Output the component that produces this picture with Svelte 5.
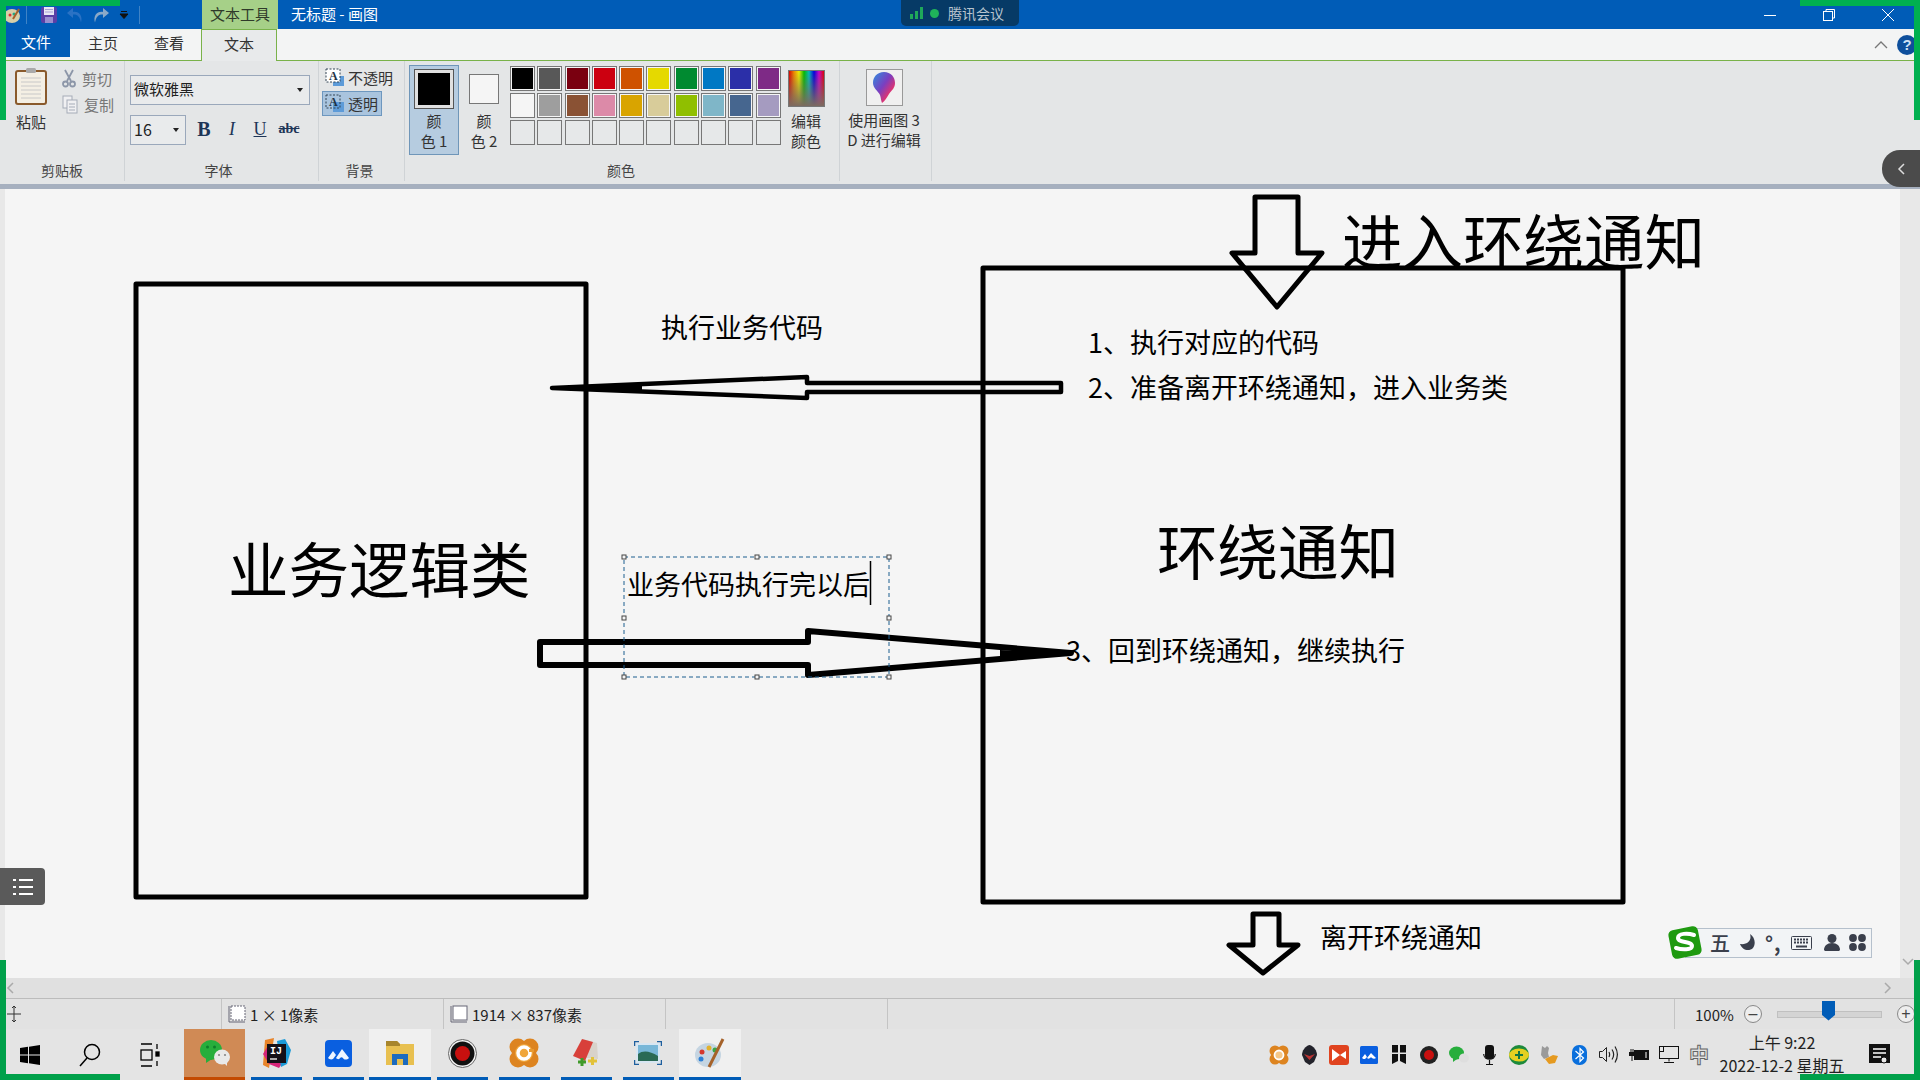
<script>
  const row1 = ['#000000','#585858','#7a0010','#cc0010','#cf5200','#e5d900','#008a30','#0078c4','#2b2fa8','#7e2a86'];
  const row2 = ['#f5f5f5','#9e9e9e','#8a5234','#dc8aa8','#d9a400','#d8cc9a','#90bf00','#7fb6c8','#46668f','#a59bc0'];
  const row3 = Array(10).fill('transparent');

  const labels = [
    { x: 228, y: 566, size: 60.5, text: '业务逻辑类' },
    { x: 1157, y: 548, size: 60.5, text: '环绕通知' },
    { x: 1342, y: 238, size: 60.5, text: '进入环绕通知' },
    { x: 661, y: 326, size: 27, text: '执行业务代码' },
    { x: 1088, y: 341, size: 27, text: '1、执行对应的代码' },
    { x: 1088, y: 386, size: 27, text: '2、准备离开环绕通知，进入业务类' },
    { x: 1066, y: 649, size: 27, text: '3、回到环绕通知，继续执行' },
    { x: 1320, y: 936, size: 27, text: '离开环绕通知' },
    { x: 627, y: 583, size: 27, text: '业务代码执行完以后' }
  ];

  const handles = [[624,557],[757,557],[889,557],[624,618],[889,618],[624,677],[757,677],[889,677]];
</script>

<div class="screen">
  <header class="titlebar">
    <div class="qat">
      <svg width="16" height="18" viewBox="0 0 16 18"><ellipse cx="8" cy="10" rx="8" ry="7" fill="#d8cfa8"/><circle cx="6" cy="9" r="1.5" fill="#d33"/><circle cx="10" cy="8" r="1.5" fill="#2a8"/><path d="M9 13 15 3" stroke="#a5622a" stroke-width="2"/></svg>
      <i class="qsep"></i>
      <svg width="16" height="16" viewBox="0 0 16 16"><rect width="16" height="16" rx="2" fill="#5a3fa6"/><rect x="3" y="0" width="10" height="8" fill="#e8e8f4"/><path d="M4 2.500h8M4 5h8" stroke="#a9a2d8"/><rect x="4" y="10" width="8" height="6" fill="#9a8fd0"/></svg>
      <svg width="16" height="16" viewBox="0 0 16 16"><path d="M14 15.500C16 9 12 4 6 5V1L0 6l6 5V7.500c4-.5 7 2 8 8z" fill="#2a72c4"/></svg>
      <svg width="16" height="16" viewBox="0 0 16 16"><path d="M2 15.500C0 9 4 4 10 5V1l6 5-6 5V7.500c-4-.5-7 2-8 8z" fill="#8aa9c8"/></svg>
      <svg width="10" height="10" viewBox="0 0 10 10"><path d="M2 1.500h6M1 4h8L5 8.500z" stroke="#111" fill="#111"/></svg>
      <i class="qsep last"></i>
    </div>
    <div class="tooltab">文本工具</div>
    <div class="wintitle">无标题 - 画图</div>
    <div class="meeting">
      <svg width="14" height="12" viewBox="0 0 14 12"><rect x="0" y="7" width="3" height="5" fill="#1fa85a"/><rect x="5" y="4" width="3" height="8" fill="#1fa85a"/><rect x="10" y="0" width="3" height="12" fill="#1fa85a"/></svg>
      <i class="dot"></i>
      <span>腾讯会议</span>
    </div>
    <div class="winbtns">
      <svg width="14" height="14" viewBox="0 0 14 14"><path d="M1 7.5h12" stroke="#fff"/></svg>
      <svg width="14" height="14" viewBox="0 0 14 14" fill="none" stroke="#fff"><rect x="1.5" y="3.5" width="9" height="9"/><path d="M4 3V1.500h8.500V10H11"/></svg>
      <svg width="14" height="14" viewBox="0 0 14 14"><path d="M1 1l12 12M13 1 1 13" stroke="#fff"/></svg>
    </div>
  </header>

  <nav class="tabs">
    <div class="filetab">文件</div>
    <div class="tab">主页</div>
    <div class="tab">查看</div>
    <div class="tab active">文本</div>
    <div class="tabright">
      <svg width="14" height="8" viewBox="0 0 14 8"><path d="M1 7l6-6 6 6" fill="none" stroke="#777" stroke-width="1.300"/></svg>
      <span class="help">?</span>
    </div>
  </nav>

  <section class="ribbon">
    <div class="group g-clip">
      <div class="gbody clip">
        <div class="paste">
          <svg width="32" height="38" viewBox="0 0 32 38"><rect x="1" y="3" width="30" height="33" rx="2" fill="#f4efe4" stroke="#8a5a2c" stroke-width="2"/><path d="M6 10h20M6 14h20M6 18h20M6 22h20M6 26h20M6 30h20" stroke="#c8c8c8"/><rect x="11" y="0" width="10" height="5" rx="1.500" fill="#aaa"/></svg>
          <span>粘贴</span>
        </div>
        <div class="cutcopy">
          <div class="mini">
            <svg width="14" height="19" viewBox="0 0 14 19" fill="none" stroke="#8c96a8" stroke-width="1.800"><path d="M3 1l6 11M11 1 5 12"/><circle cx="3.500" cy="15" r="2.500"/><circle cx="10.500" cy="15" r="2.500"/></svg>
            <span>剪切</span>
          </div>
          <div class="mini">
            <svg width="16" height="19" viewBox="0 0 16 19" fill="#f0f0f2" stroke="#a5acb8"><rect x="1" y="1" width="9" height="12"/><rect x="5" y="5" width="10" height="13"/><path d="M7 9h6M7 12h6M7 15h6"/></svg>
            <span>复制</span>
          </div>
        </div>
      </div>
      <div class="glabel">剪贴板</div>
    </div>

    <div class="group g-font">
      <div class="gbody fontbody">
        <div class="combo fontname"><span>微软雅黑</span><i class="caret-down"></i></div>
        <div class="fontrow">
          <div class="combo fontsize"><span>16</span><i class="caret-down"></i></div>
          <b class="fmt bold">B</b>
          <i class="fmt italic">I</i>
          <u class="fmt under">U</u>
          <s class="fmt strike">abc</s>
        </div>
      </div>
      <div class="glabel">字体</div>
    </div>

    <div class="group g-bg">
      <div class="gbody bgbody">
        <div class="bgopt">
          <svg width="20" height="19" viewBox="0 0 20 19"><rect x="8" y="8" width="11" height="10" fill="#5d9bd8"/><rect x="1" y="1" width="14" height="13" fill="#fff" stroke="#345" stroke-dasharray="2 1.500"/><text x="4" y="12" class="iconA">A</text></svg>
          <span>不透明</span>
        </div>
        <div class="bgopt on">
          <svg width="20" height="19" viewBox="0 0 20 19"><rect x="8" y="8" width="11" height="10" fill="#5d9bd8"/><rect x="1" y="1" width="14" height="13" fill="none" stroke="#345" stroke-dasharray="2 1.500"/><text x="4" y="12" class="iconA">A</text></svg>
          <span>透明</span>
        </div>
      </div>
      <div class="glabel">背景</div>
    </div>

    <div class="group g-color">
      <div class="gbody colorbody">
        <div class="colorbtn on">
          <span class="big"><i></i></span>
          <span class="cname">颜<br />色 1</span>
        </div>
        <div class="colorbtn">
          <span class="small"></span>
          <span class="cname">颜<br />色 2</span>
        </div>
        <div class="palette">
          {#each [...row1, ...row2] as c}
            <span class="sw"><i style:background={c}></i></span>
          {/each}
          {#each row3 as c}
            <span class="sw empty"></span>
          {/each}
        </div>
        <div class="edit">
          <span class="rainbow"></span>
          <span class="cname">编辑<br />颜色</span>
        </div>
      </div>
      <div class="glabel">颜色</div>
    </div>

    <div class="group g-3d">
      <div class="gbody p3d">
        <span class="p3dbtn">
          <svg width="24" height="33" viewBox="0 0 24 33">
            <defs><linearGradient id="drop" x1="0" y1="0" x2="1" y2="1"><stop offset="0" stop-color="#2e8fe0"/><stop offset=".45" stop-color="#7a3fc0"/><stop offset=".75" stop-color="#e8326a"/><stop offset="1" stop-color="#f0a020"/></linearGradient></defs>
            <path d="M12 1C5 1 1 6 1 12c0 5 5 8 7 12 1 3 1 6 2 8 3-2 5-6 7-9 3-4 6-6 6-11C23 6 19 1 12 1z" fill="url(#drop)"/>
          </svg>
        </span>
        <span class="cname">使用画图 3<br />D 进行编辑</span>
      </div>
    </div>
  </section>

  <div class="band"></div>

  <main class="workspace">
    <svg class="canvas" viewBox="5 189 1895 789" width="1895" height="789">
      <rect x="5" y="189" width="1895" height="789" fill="#f5f5f5" />
      <g fill="none" stroke="#000" stroke-width="5" stroke-linejoin="round">
        <rect x="136" y="284" width="450" height="613" />
        <rect x="983" y="268" width="640" height="634" />
        <path d="M1255 197h43v56h24l-45 54-45-54h23z" />
        <path d="M1253 914h26v31h19l-35 28-34-28h24z" />
        <path d="M540 642h268v-11l263 22-263 22v-10H540z" stroke-width="6" />
        <path d="M552 388l255-11v6h254v9H807v6z" stroke-width="4.500" />
      </g>
      <path d="M552 388l90-3v6z" fill="#000" />
      <path d="M1000 650l72 3-72 5z" fill="#000" />
      {#each labels as l}
        <text x={l.x} y={l.y} font-size={l.size} dominant-baseline="central" class="ink">{l.text}</text>
      {/each}
      <path d="M624 557h265v120H624z" fill="none" stroke="#1d5f8f" stroke-dasharray="4 3" />
      <path d="M870.500 561v44" stroke="#000" stroke-width="1.500" />
      {#each handles as h}
        <rect x={h[0] - 2} y={h[1] - 2} width="4" height="4" fill="#f5f5f5" stroke="#444" />
      {/each}
    </svg>
    <div class="vscroll">
      <svg width="12" height="8" viewBox="0 0 12 8"><path d="M1 1l5 5 5-5" fill="none" stroke="#aaa" stroke-width="1.500"/></svg>
    </div>
    <div class="ime">
      <svg class="s-logo" width="36" height="35" viewBox="0 0 36 35"><rect x="3" y="3" width="30" height="29" rx="5" transform="rotate(-11 18 17.500)" fill="#1f9a10"/><path d="M27 10c-6-2-16-2-16 3 0 5 14 3 14 8 0 4-10 4-16 2" fill="none" stroke="#fff" stroke-width="4" stroke-linecap="round"/></svg>
      <span class="imebar">
        <b>五</b>
        <svg width="17" height="17" viewBox="0 0 17 17"><path d="M11 0c2 6-2 11-10 10 2 6 9 8 13 4 3-4 2-11-3-14z" fill="#3a3f4c"/></svg>
        <b class="punct">°,</b>
        <svg width="21" height="14" viewBox="0 0 21 14"><rect x=".5" y=".5" width="20" height="13" rx="1" fill="none" stroke="#3a3f4c"/><path d="M3 3.500h15M3 6.500h15" stroke="#3a3f4c" stroke-width="2" stroke-dasharray="2 1"/><path d="M5 10.500h11" stroke="#3a3f4c" stroke-width="2"/></svg>
        <svg class="person" width="16" height="17" viewBox="0 0 16 17"><circle cx="8" cy="4.500" r="4.500" fill="#3a3f4c"/><path d="M0 16c0-4 3-7 8-7s8 3 8 7l-1 1H1z" fill="#3a3f4c"/></svg>
        <svg width="17" height="17" viewBox="0 0 17 17" fill="#3a3f4c"><circle cx="4" cy="4" r="3.900"/><circle cx="13" cy="4" r="3.900"/><circle cx="4" cy="13" r="3.900"/><circle cx="13" cy="13" r="3.900"/></svg>
      </span>
    </div>
    <div class="listchip">
      <svg width="22" height="18" viewBox="0 0 22 18" stroke="#fff" stroke-width="2"><path d="M7 2h14M7 9h14M7 16h14"/><path d="M1 2h3M1 9h3M1 16h3"/></svg>
    </div>
  </main>

  <div class="hscroll">
    <svg width="8" height="12" viewBox="0 0 8 12"><path d="M7 1 2 6l5 5" fill="none" stroke="#aaa" stroke-width="1.500"/></svg>
    <svg width="8" height="12" viewBox="0 0 8 12"><path d="M1 1l5 5-5 5" fill="none" stroke="#aaa" stroke-width="1.500"/></svg>
  </div>

  <footer class="status">
    <div class="cell c1">
      <svg width="16" height="18" viewBox="0 0 16 18" stroke="#333" fill="none"><path d="M8 1v16M1 9h14M6 3l2-2 2 2M6 15l2 2 2-2"/></svg>
    </div>
    <div class="cell c2">
      <svg width="18" height="18" viewBox="0 0 18 18"><rect x="3" y="1" width="14" height="14" fill="#fff" stroke="#667" stroke-dasharray="2 1"/><path d="M1 1v16h16" fill="none" stroke="#667"/></svg>
      <span>1 × 1像素</span>
    </div>
    <div class="cell c3">
      <svg width="18" height="18" viewBox="0 0 18 18"><rect x="3" y="1" width="14" height="14" fill="#fff" stroke="#667"/><path d="M1 1v16h16" fill="none" stroke="#667"/></svg>
      <span>1914 × 837像素</span>
    </div>
    <div class="cell c4"></div>
    <div class="cell c5"></div>
    <div class="zoom">
      <span class="pct">100%</span>
      <span class="zbtn">–</span>
      <span class="slider"><i></i></span>
      <span class="zbtn">+</span>
    </div>
  </footer>

  <footer class="taskbar">
    <div class="sysbtn">
      <svg width="20" height="20" viewBox="0 0 20 20" fill="#000"><path d="M0 3l8-1.200V9.500H0zM9 1.700 20 0v9.500H9zM0 10.500h8v7.700L0 17zM9 10.500h11V20L9 18.300z"/></svg>
    </div>
    <div class="sysbtn">
      <svg width="22" height="24" viewBox="0 0 22 24" fill="none" stroke="#000" stroke-width="1.500"><circle cx="13" cy="9" r="7.500"/><path d="M8 15 1 23"/></svg>
    </div>
    <div class="sysbtn">
      <svg width="20" height="24" viewBox="0 0 20 24" fill="none" stroke="#000" stroke-width="1.300"><path d="M1 1h11M1 23h11"/><rect x="1" y="7" width="11" height="10"/><path d="M17 1v5M17 18v5"/><rect x="16" y="9" width="3" height="4" fill="#000"/></svg>
    </div>
    <div class="apps">
      <div class="app wechat">
        <svg width="30" height="26" viewBox="0 0 30 26"><ellipse cx="11" cy="10" rx="11" ry="10" fill="#27ae3c"/><circle cx="7.500" cy="7" r="1.500" fill="#0d7f2a"/><circle cx="14.500" cy="7" r="1.500" fill="#0d7f2a"/><path d="M6 17l0 6 6-4z" fill="#27ae3c"/><ellipse cx="22" cy="17" rx="8" ry="7.500" fill="#e9e9e9"/><circle cx="19" cy="15" r="1.100" fill="#888"/><circle cx="25" cy="15" r="1.100" fill="#888"/><path d="M24 23l3 3v-5z" fill="#e9e9e9"/></svg>
      </div>
      <div class="app">
        <svg width="30" height="30" viewBox="0 0 30 30"><path d="M4 2 13 0l-5 30-6-3z" fill="#e8842a"/><path d="M8 6 2 16l6 10 10 4 4-6z" fill="#d6257a"/><path d="M16 3l8-2 6 11-4 14-6 3z" fill="#1c9ad6"/><rect x="6" y="6" width="19" height="19" fill="#141018"/><text x="9" y="16" class="ij">IJ</text><path d="M9 21h7" stroke="#fff" stroke-width="1.300"/></svg>
      </div>
      <div class="app">
        <svg width="27" height="27" viewBox="0 0 27 27"><rect width="27" height="27" rx="4" fill="#0a5fe0"/><path d="M3 18l5-7 3 4-3 4c-2 1-4 0-5-1zM11 18l6-9 7 9c-2 2-5 2-6 0-1-1-2-1-3 0-1 2-3 1-4 0z" fill="#eef5ff"/></svg>
      </div>
      <div class="app hl">
        <svg width="28" height="24" viewBox="0 0 28 24"><path d="M0 0h11l3 3h14v21H0z" fill="#e8c050"/><path d="M0 0h11l3 3v2H0z" fill="#a8862c"/><path d="M6 24V13h16v11h-5v-6h-6v6z" fill="#1c6bbf"/></svg>
      </div>
      <div class="app">
        <svg width="29" height="29" viewBox="0 0 29 29"><circle cx="14.500" cy="14.500" r="14" fill="#f4f4f4" stroke="#666"/><circle cx="14.500" cy="14.500" r="12" fill="#111"/><circle cx="14.500" cy="14.500" r="7.500" fill="#c8100f"/></svg>
      </div>
      <div class="app">
        <svg width="30" height="30" viewBox="0 0 30 30"><g fill="#dd8420"><circle cx="9" cy="9" r="8.500"/><circle cx="21" cy="9" r="8.500"/><circle cx="9" cy="21" r="8.500"/><circle cx="21" cy="21" r="8.500"/></g><circle cx="15" cy="15" r="9" fill="#f0a63a"/><circle cx="15" cy="15" r="6" fill="none" stroke="#fff" stroke-width="3.500"/><path d="M20 11h5v3h-5z" fill="#e89a30"/></svg>
      </div>
      <div class="app">
        <svg width="28" height="28" viewBox="0 0 28 28"><path d="M10 0l15 4 1 16-20-2z" fill="#d8d2ca"/><path d="M1 17 10 0l11 3-8 19z" fill="#d8403a"/><path d="M6 23h8M10 19v8" stroke="#3f9a2a" stroke-width="3"/><path d="M16 22h9M20.500 18v8" stroke="#e2c23a" stroke-width="3"/></svg>
      </div>
      <div class="app">
        <svg width="28" height="24" viewBox="0 0 28 24"><rect x="2" y="2" width="24" height="20" fill="#d7e6f2"/><rect x="4" y="4" width="20" height="16" fill="#78b7d8"/><path d="M4 13c5-4 12-3 20 2v5H4z" fill="#2a6a55"/><path d="M0 5V0h5M23 0h5v5M0 19v5h5M23 24h5v-5" fill="none" stroke="#1d5f9f" stroke-width="2.500"/></svg>
      </div>
      <div class="app hl">
        <svg width="30" height="30" viewBox="0 0 30 30"><ellipse cx="13" cy="17" rx="13" ry="12" fill="#c5d5e2"/><circle cx="7" cy="14" r="2.500" fill="#d5372e"/><circle cx="14" cy="10" r="2.500" fill="#e2b12e"/><circle cx="6" cy="21" r="2.500" fill="#2e7fd5"/><circle cx="20" cy="12" r="2.500" fill="#38a848"/><path d="M14 29 28 1" stroke="#a5622a" stroke-width="3"/></svg>
      </div>
    </div>

    <div class="tray">
      <span class="ti"><svg width="20" height="20" viewBox="0 0 20 20"><g fill="#dd8420"><circle cx="6" cy="6" r="5.500"/><circle cx="14" cy="6" r="5.500"/><circle cx="6" cy="14" r="5.500"/><circle cx="14" cy="14" r="5.500"/></g><circle cx="10" cy="10" r="4.500" fill="#f5c788" stroke="#fff" stroke-width="1.800"/></svg></span>
      <span class="ti"><svg width="15" height="20" viewBox="0 0 15 20"><path d="M7.500 0C12 1 15 6 15 10l-3 7-4.500 3L3 17l-3-7C0 6 3 1 7.500 0z" fill="#23232b"/><path d="M2 9l5.500 2L13 9l-5.500 6z" fill="#b33"/></svg></span>
      <span class="ti"><svg width="20" height="20" viewBox="0 0 20 20"><rect width="20" height="20" rx="3" fill="#e0431f"/><path d="M3 4l8 6-8 6zM17 6l-6 4 6 4z" fill="#fff"/></svg></span>
      <span class="ti"><svg width="18" height="18" viewBox="0 0 18 18"><rect width="18" height="18" rx="1.500" fill="#0a5fe0"/><path d="M2 12l3-4 2 3-2 2c-1 0-2 0-3-1zM7 12l4-5 5 5c-1 1-3 1-4 0-1-1-1-1-2 0s-2 1-3 0z" fill="#fff"/></svg></span>
      <span class="ti"><svg width="14" height="19" viewBox="0 0 14 19" fill="#111"><path d="M0 0h6v7.500H0zM8 0h6v7.500H8zM0 9h6v7l-1 .5L0 19zM8 9h6v10l-5-2.500-1-.5z"/></svg></span>
      <span class="ti"><svg width="18" height="18" viewBox="0 0 18 18"><circle cx="9" cy="9" r="9" fill="#222"/><circle cx="9" cy="9" r="5" fill="#c8100f"/></svg></span>
      <span class="ti"><svg width="20" height="18" viewBox="0 0 20 18"><ellipse cx="7.500" cy="7" rx="7.500" ry="6.500" fill="#27ae3c"/><path d="M4 12v4l4-3z" fill="#27ae3c"/><ellipse cx="15" cy="12" rx="5" ry="4.500" fill="#dedede"/></svg></span>
      <span class="ti"><svg width="13" height="20" viewBox="0 0 13 20"><rect x="2" y="0" width="9" height="14" rx="3" fill="#111"/><path d="M.7 9c0 7 11.600 7 11.600 0M6.500 15v4M3 19.500h7" fill="none" stroke="#111" stroke-width="1.200"/></svg></span>
      <span class="ti"><svg width="20" height="20" viewBox="0 0 20 20"><circle cx="10" cy="10" r="10" fill="#1d8a3b"/><ellipse cx="10" cy="10" rx="10" ry="6.500" fill="#e5d021"/><path d="M6 10h8M10 6v8" stroke="#174" stroke-width="2"/></svg></span>
      <span class="ti"><svg width="18" height="18" viewBox="0 0 18 18"><path d="M2 0l3 2 2-2 2 2-1 5 1 4-5 2-3-4z" fill="#9a9a9a"/><path d="M5 13l8-4 5 1-3 7-6 1z" fill="#e59a20"/></svg></span>
      <span class="ti"><svg width="15" height="20" viewBox="0 0 15 20"><rect width="15" height="20" rx="7" fill="#0a6fdc"/><path d="M3.500 6l8 7-3.500 3.500v-13L11.500 7l-8 7" fill="none" stroke="#fff" stroke-width="1.200"/></svg></span>
      <span class="ti"><svg width="20" height="17" viewBox="0 0 20 17" fill="none" stroke="#222"><path d="M.5 5.500h3l4-4v14l-4-4h-3z"/><path d="M10 6c1 2 1 3 0 5M13 3.500c2 3 2 7 0 10M16 .5c3 5 3 11 0 16" stroke-width="1.200"/></svg></span>
      <span class="ti"><svg width="20" height="12" viewBox="0 0 20 12"><path d="M2 0v3M4 0v3M3 7v5" stroke="#111"/><rect x="0" y="3" width="5" height="4" fill="#111"/><rect x="5" y="1" width="15" height="10" fill="#111"/><rect x="16" y="3" width="2" height="6" fill="#888"/></svg></span>
      <span class="ti"><svg width="20" height="17" viewBox="0 0 20 17" fill="none" stroke="#111"><rect x=".5" y=".5" width="19" height="12"/><path d="M10 12.500v3M5 16.500h10"/><rect x=".5" y=".5" width="4" height="5" fill="#e8e8e8"/></svg></span>
      <span class="ti cn">中</span>
    </div>
    <div class="clock">
      <span>上午 9:22</span>
      <span>2022-12-2 星期五</span>
    </div>
    <div class="notify">
      <svg width="21" height="21" viewBox="0 0 21 21"><path d="M0 0h21v19H0z" fill="#111"/><path d="M4 5h13M4 9h13M4 13h8" stroke="#fff" stroke-width="1.500"/><circle cx="15" cy="16" r="3" fill="#e8e8e8" stroke="#111"/></svg>
    </div>
  </footer>

  <i class="g top-l"></i>
  <i class="g left-t"></i>
  <i class="g top-r"></i>
  <i class="g right-t"></i>
  <i class="g2 left-b"></i>
  <i class="g2 bottom-l"></i>
  <i class="g2 right-b"></i>
  <i class="g2 bottom-r"></i>
  <div class="sidechip">
    <svg width="8" height="12" viewBox="0 0 8 12"><path d="M7 1 2 6l5 5" fill="none" stroke="#ddd" stroke-width="1.500"/></svg>
  </div>
</div>

<style>
  :global(body) {
    margin: 0;
    overflow: hidden;
  }

  .screen {
    position: relative;
    width: 1920px;
    height: 1080px;
    overflow: hidden;
    display: flex;
    flex-direction: column;
    background: #e6e6e6;
    color: #333;
    font-family: "Noto Sans CJK SC", "Noto Sans", sans-serif;
    font-size: 15px;
  }

  .titlebar {
    height: 29px;
    flex: none;
    display: flex;
    align-items: center;
    background: #005cb7;
    position: relative;
    color: #fff;
  }

  .qat {
    width: 202px;
    display: flex;
    align-items: center;
    gap: 10px;
    padding-left: 4px;
    box-sizing: border-box;
  }

  .qat svg {
    flex: none;
  }

  .qsep {
    width: 1px;
    height: 18px;
    background: #3f83c6;
    margin: 0 4px 0 -4px;
  }

  .qsep.last {
    margin: 0;
  }

  .tooltab {
    width: 76px;
    height: 29px;
    line-height: 27px;
    text-align: center;
    background: #a6d088;
    color: #2f3a2a;
  }

  .wintitle {
    margin-left: 13px;
    padding-bottom: 2px;
  }

  .meeting {
    position: absolute;
    left: 901px;
    top: 0;
    width: 118px;
    height: 26px;
    box-sizing: border-box;
    padding-left: 9px;
    display: flex;
    align-items: center;
    gap: 6px;
    background: #063a66;
    border-radius: 0 0 5px 5px;
    color: #b8c4cf;
    font-size: 14px;
  }

  .meeting span {
    margin-left: 3px;
  }

  .dot {
    width: 9px;
    height: 9px;
    border-radius: 50%;
    background: #1fb25a;
  }

  .winbtns {
    margin-left: auto;
    display: flex;
    gap: 45px;
    padding-right: 25px;
  }

  .tabs {
    height: 32px;
    flex: none;
    display: flex;
    background: #f3f4f4;
    border-bottom: 1px solid #79b24a;
    box-sizing: border-box;
    padding-left: 6px;
    position: relative;
  }

  .filetab {
    width: 64px;
    height: 28px;
    line-height: 26px;
    box-sizing: border-box;
    padding-right: 4px;
    text-align: center;
    background: #005cb7;
    color: #fff;
  }

  .tab {
    width: 66px;
    line-height: 28px;
    text-align: center;
  }

  .tab.active {
    width: 76px;
    height: 32px;
    box-sizing: border-box;
    background: #e8eaeb;
    border: 1px solid #79b24a;
    border-bottom: none;
    margin-left: -1px;
  }

  .tabright {
    margin-left: auto;
    display: flex;
    align-items: center;
    gap: 9px;
  }

  .help {
    width: 20px;
    height: 20px;
    margin-right: 3px;
    border-radius: 50%;
    background: #0e4f9c;
    color: #cfe0f4;
    text-align: center;
    line-height: 20px;
    font-size: 15px;
    font-family: "Liberation Sans", sans-serif;
    font-weight: 700;
  }

  .ribbon {
    height: 123px;
    flex: none;
    display: flex;
    background: #e4e6e7;
  }

  .group {
    flex: none;
    display: flex;
    flex-direction: column;
    box-sizing: border-box;
    border-right: 1px solid #cfd3d6;
    margin-bottom: 3px;
  }

  .gbody {
    flex: 1;
    min-height: 0;
  }

  .glabel {
    height: 22px;
    line-height: 22px;
    text-align: center;
    font-size: 14px;
    color: #444;
  }

  .g-clip { width: 125px; }
  .g-font { width: 194px; }
  .g-bg { width: 86px; }
  .g-color { width: 435px; }
  .g-3d { width: 92px; }

  .g-font .glabel { padding-right: 6px; }
  .g-bg .glabel { padding-right: 4px; }
  .g-color .glabel { padding-right: 2px; }

  .clip {
    display: flex;
    padding: 7px 0 0 15px;
    gap: 15px;
  }

  .paste {
    display: flex;
    flex-direction: column;
    align-items: center;
    gap: 5px;
    font-size: 15px;
    width: 32px;
  }

  .cutcopy {
    display: flex;
    flex-direction: column;
    gap: 6px;
    color: #777;
    font-size: 15px;
  }

  .mini {
    display: flex;
    align-items: center;
    gap: 6px;
    height: 20px;
  }

  .fontbody {
    padding: 14px 0 0 5px;
    display: flex;
    flex-direction: column;
    gap: 10px;
  }

  .combo {
    box-sizing: border-box;
    border: 1px solid #9aa8bb;
    background: #e9ebec;
    height: 30px;
    display: flex;
    align-items: center;
    justify-content: space-between;
    padding: 0 4px 0 3px;
    font-size: 15px;
    color: #222;
  }

  .combo span {
    margin-top: -3px;
  }

  .fontname { width: 180px; }
  .fontsize { width: 56px; font-size: 16px; }

  .caret-down {
    width: 0;
    height: 0;
    border: 3px solid transparent;
    border-top: 4px solid #222;
    border-bottom: none;
    margin-right: 2px;
  }

  .fontrow {
    display: flex;
    align-items: center;
  }

  .fmt {
    font-family: "Liberation Serif", serif;
    color: #1d3557;
    text-align: center;
    width: 28px;
    font-size: 18px;
    padding-bottom: 2px;
  }

  .bold { margin-left: 4px; font-size: 20px; }
  .strike { font-size: 14px; font-weight: 700; width: 30px; }

  .bgbody {
    padding: 4px 0 0 3px;
    display: flex;
    flex-direction: column;
    gap: 1px;
  }

  .bgopt {
    box-sizing: border-box;
    display: flex;
    align-items: center;
    gap: 3px;
    width: 60px;
    height: 25px;
    padding-left: 3px;
    white-space: nowrap;
    font-size: 15px;
  }

  .bgopt svg,
  .bgopt span {
    flex: none;
  }

  .bgopt.on {
    background: #a9c4de;
    border: 1px solid #6d97bf;
    padding-left: 2px;
  }

  .iconA {
    font-family: "Liberation Serif", serif;
    font-size: 12px;
    font-weight: 700;
    fill: #234;
  }

  .colorbody {
    display: flex;
    padding-top: 4px;
    padding-left: 4px;
  }

  .colorbtn {
    box-sizing: border-box;
    width: 50px;
    height: 90px;
    display: flex;
    flex-direction: column;
    align-items: center;
    padding-top: 3px;
    border: 1px solid transparent;
  }

  .colorbtn.on {
    background: #b6cce0;
    border-color: #6f96b9;
  }

  .big {
    width: 40px;
    height: 40px;
    box-sizing: border-box;
    border: 1px solid #555;
    background: #e0e0e0;
    padding: 3px;
    display: block;
  }

  .big i {
    display: block;
    width: 100%;
    height: 100%;
    background: #000;
  }

  .small {
    width: 30px;
    height: 30px;
    margin: 5px 0;
    border: 1px solid #777;
    box-sizing: border-box;
    background: #f5f5f5;
  }

  .cname {
    text-align: center;
    font-size: 15px;
    line-height: 20px;
    color: #333;
    margin-top: 2px;
    white-space: nowrap;
  }

  .palette {
    display: grid;
    grid-template-columns: repeat(10, 25px);
    grid-auto-rows: 25px;
    gap: 2px 2.3px;
    margin-left: 1px;
    margin-top: 1px;
    width: 271px;
    height: 80px;
  }

  .sw {
    box-sizing: border-box;
    border: 1px solid #777;
    background: #f5f5f5;
    padding: 1px;
    display: block;
  }

  .sw i {
    display: block;
    width: 100%;
    height: 100%;
  }

  .sw.empty { background: #e6e8e9; }

  .edit {
    display: flex;
    flex-direction: column;
    align-items: center;
    width: 40px;
    margin-left: 5px;
    padding-top: 5px;
  }

  .rainbow {
    width: 37px;
    height: 37px;
    box-sizing: border-box;
    border: 1px solid #777;
    background:
      linear-gradient(to bottom, transparent, #7c6a60),
      linear-gradient(to right, #d00, #e80, #ee0, #0b0, #0bb, #00d, #c0c, #d00);
  }

  .edit .cname { margin-top: 4px; }

  .p3d {
    display: flex;
    flex-direction: column;
    align-items: center;
    padding: 8px 3px 0 0;
  }

  .p3dbtn {
    box-sizing: border-box;
    width: 37px;
    height: 37px;
    display: flex;
    align-items: center;
    justify-content: center;
    background: #f0f0f0;
    border: 1px solid #999;
  }

  .p3d .cname { margin-top: 4px; }

  .band {
    height: 5px;
    flex: none;
    background: #a6b0bf;
  }

  .workspace {
    height: 789px;
    flex: none;
    position: relative;
    padding-left: 5px;
    background: #e8e8e8;
  }

  .canvas {
    display: block;
  }

  .ink {
    font-family: "Noto Sans CJK SC", sans-serif;
    fill: #000;
  }

  .vscroll {
    position: absolute;
    right: 6px;
    bottom: 8px;
  }

  .ime {
    position: absolute;
    left: 1667px;
    top: 736px;
    display: flex;
    align-items: center;
  }

  .s-logo {
    position: relative;
    z-index: 1;
    flex: none;
  }

  .imebar {
    display: flex;
    align-items: center;
    gap: 9px;
    width: 187px;
    height: 30px;
    box-sizing: border-box;
    margin-left: -18px;
    padding-left: 24px;
    background: #f2f4f6;
    border: 1px solid #b5c0cc;
    color: #3a3f4c;
    font-size: 20px;
  }

  .imebar svg {
    flex: none;
  }

  .imebar .person {
    margin-left: 3px;
  }

  .imebar b {
    font-weight: 500;
  }

  .imebar .punct {
    letter-spacing: 1px;
    font-weight: 700;
  }

  .listchip {
    position: absolute;
    left: 0;
    top: 679px;
    width: 45px;
    height: 37px;
    background: #5a5a5a;
    border-radius: 0 4px 4px 0;
    display: flex;
    align-items: center;
    justify-content: center;
  }

  .hscroll {
    height: 20px;
    flex: none;
    display: flex;
    align-items: center;
    justify-content: space-between;
    padding: 0 28px 0 6px;
    background: #e0e0e0;
  }

  .status {
    height: 31px;
    flex: none;
    display: flex;
    background: #e2e2e2;
    border-top: 1px solid #bcbcbc;
    box-sizing: border-box;
    font-size: 15px;
    color: #222;
  }

  .cell {
    box-sizing: border-box;
    height: 100%;
    display: flex;
    align-items: center;
    gap: 4px;
    padding-left: 6px;
    border-right: 1px solid #c4c4c4;
  }

  .c1 { width: 222px; }
  .c2 { width: 222px; }
  .c3 { width: 222px; }
  .c4 { width: 222px; }
  .c5 { width: 787px; }

  .zoom {
    display: flex;
    align-items: center;
    padding-left: 20px;
    gap: 7px;
  }

  .pct { width: 42px; font-size: 15px; }

  .zbtn {
    width: 18px;
    height: 18px;
    box-sizing: border-box;
    border: 1px solid #888;
    border-radius: 50%;
    background: #eee;
    text-align: center;
    line-height: 15px;
    font-size: 16px;
    color: #444;
    font-family: "Liberation Sans", sans-serif;
  }

  .slider {
    position: relative;
    width: 103px;
    height: 5px;
    margin: 0 8px;
    background: #d4d4d4;
    border: 1px solid #c0c0c0;
  }

  .slider i {
    position: absolute;
    left: 44px;
    top: -11px;
    width: 13px;
    height: 20px;
    background: #005cb7;
    clip-path: polygon(0 0, 100% 0, 100% 72%, 50% 100%, 0 72%);
  }

  .taskbar {
    height: 51px;
    flex: none;
    display: flex;
    align-items: center;
    background: #e4e4e4;
  }

  .sysbtn {
    width: 60px;
    height: 100%;
    display: flex;
    align-items: center;
    justify-content: center;
    flex: none;
  }

  .apps {
    display: flex;
    height: 100%;
    margin-left: 4px;
  }

  .app {
    width: 62px;
    height: 100%;
    box-sizing: border-box;
    padding-bottom: 3px;
    position: relative;
    display: flex;
    align-items: center;
    justify-content: center;
  }

  .app svg {
    flex: none;
  }

  .app::after {
    content: "";
    position: absolute;
    left: 6px;
    right: 5px;
    bottom: 0;
    height: 3px;
    background: #005cb7;
  }

  .app.hl { background: #f0f0f0; }
  .app.hl::after { left: 0; right: 0; }

  .app.wechat { width: 61px; background: #d08a55; }
  .app.wechat::after { left: 0; right: 0; background: #c44a00; }

  .ij {
    font-family: "Liberation Mono", monospace;
    font-size: 10px;
    font-weight: 700;
    fill: #fff;
  }

  .tray {
    margin-left: auto;
    display: flex;
    align-items: center;
  }

  .ti {
    width: 30px;
    display: flex;
    justify-content: center;
    align-items: center;
  }

  .cn {
    font-size: 20px;
    font-weight: 700;
    color: #e0e0e0;
    -webkit-text-stroke: 1px #666;
  }

  .clock {
    width: 136px;
    display: flex;
    flex-direction: column;
    align-items: center;
    font-size: 16px;
    line-height: 23px;
    color: #222;
    white-space: nowrap;
    margin-top: -2px;
  }

  .notify {
    width: 58px;
    margin-right: 12px;
    display: flex;
    justify-content: center;
  }

  .g, .g2 {
    position: absolute;
    background: #00b050;
  }

  .g2 { background: #00a04a; }

  .top-l { left: 0; top: 0; width: 120px; height: 6px; }
  .left-t { left: 0; top: 0; width: 6px; height: 120px; }
  .top-r { right: 0; top: 0; width: 120px; height: 6px; }
  .right-t { right: 0; top: 0; width: 6px; height: 120px; }
  .left-b { left: 0; bottom: 0; width: 6px; height: 120px; }
  .bottom-l { left: 0; bottom: 0; width: 120px; height: 6px; }
  .right-b { right: 0; bottom: 0; width: 6px; height: 120px; }
  .bottom-r { right: 0; bottom: 0; width: 120px; height: 6px; }

  .sidechip {
    position: absolute;
    right: 0;
    top: 150px;
    width: 38px;
    height: 37px;
    background: #4b4b4b;
    border-radius: 18px 0 0 18px;
    display: flex;
    align-items: center;
    justify-content: center;
  }
</style>
